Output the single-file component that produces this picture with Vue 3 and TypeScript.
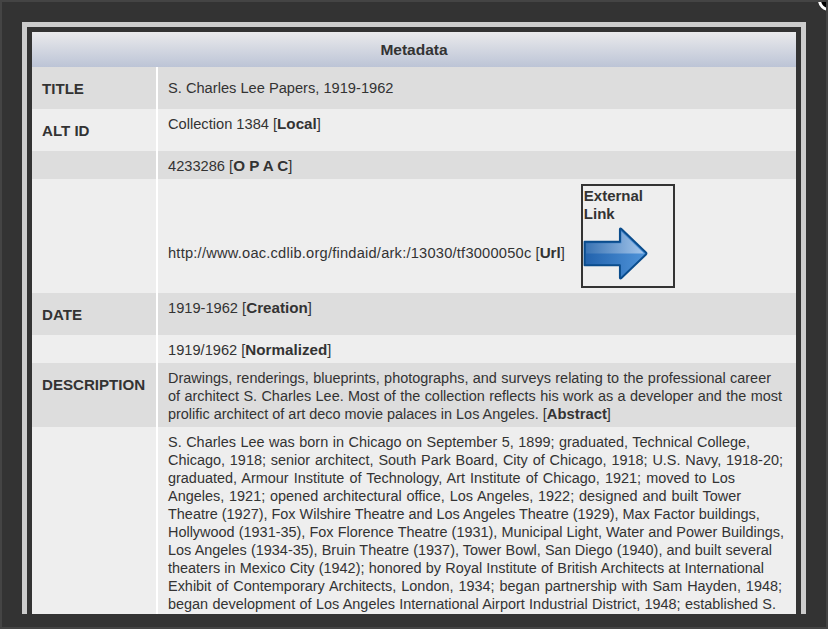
<script setup lang="ts">
interface Line {
  t: string
  w: number
}
interface Row {
  label?: string
  text?: string
  tag?: string
  tall?: boolean
  mid?: boolean
  lines?: Line[]
}
const rows: Row[] = [
  { label: 'TITLE', text: 'S. Charles Lee Papers, 1919-1962', tall: true, mid: true },
  { label: 'ALT ID', text: 'Collection 1384 ', tag: 'Local', tall: true },
  { text: '4233286 ', tag: 'O P A C' },
]
const rowsAfter: Row[] = [
  { label: 'DATE', text: '1919-1962 ', tag: 'Creation', tall: true },
  { text: '1919/1962 ', tag: 'Normalized' },
  {
    label: 'DESCRIPTION',
    lines: [
      { t: 'Drawings, renderings, blueprints, photographs, and surveys relating to the professional career', w: 603 },
      { t: 'of architect S. Charles Lee. Most of the collection reflects his work as a developer and the most', w: 614 },
    ],
    text: 'prolific architect of art deco movie palaces in Los Angeles. ',
    tag: 'Abstract',
  },
  {
    lines: [
      { t: 'S. Charles Lee was born in Chicago on September 5, 1899; graduated, Technical College,', w: 582 },
      { t: 'Chicago, 1918; senior architect, South Park Board, City of Chicago, 1918; U.S. Navy, 1918-20;', w: 615 },
      { t: 'graduated, Armour Institute of Technology, Art Institute of Chicago, 1921; moved to Los', w: 567 },
      { t: 'Angeles, 1921; opened architectural office, Los Angeles, 1922; designed and built Tower', w: 573 },
      { t: 'Theatre (1927), Fox Wilshire Theatre and Los Angeles Theatre (1929), Max Factor buildings,', w: 589 },
      { t: 'Hollywood (1931-35), Fox Florence Theatre (1931), Municipal Light, Water and Power Buildings,', w: 616 },
      { t: 'Los Angeles (1934-35), Bruin Theatre (1937), Tower Bowl, San Diego (1940), and built several', w: 604 },
      { t: 'theaters in Mexico City (1942); honored by Royal Institute of British Architects at International', w: 596 },
      { t: 'Exhibit of Contemporary Architects, London, 1934; began partnership with Sam Hayden, 1948;', w: 614 },
      { t: 'began development of Los Angeles International Airport Industrial District, 1948; established S.', w: 608 },
    ],
  },
]
</script>

<template>
  <div class="page">
    <div class="viewport">
      <div class="panel">
        <div class="inner">
          <h1 class="head">Metadata</h1>
          <div v-for="(r, i) in rows" :key="i" class="row" :class="{ alt: i % 2 === 0, tall: r.tall, mid: r.mid }">
            <div class="label">{{ r.label }}</div>
            <div class="value">{{ r.text }}<template v-if="r.tag">[<b>{{ r.tag }}</b>]</template></div>
          </div>
          <div class="row link-row">
            <div class="label"></div>
            <div class="value link-value">
              <span class="url"><span class="addr">http://www.oac.cdlib.org/findaid/ark:/13030/tf3000050c</span> [<b>Url</b>]</span>
              <div class="ext">
                <b>External Link</b>
                <svg class="arrow" width="65" height="53" viewBox="0 0 66 54">
                  <defs>
                    <linearGradient id="af" x1="0" y1="0" x2="1" y2="0">
                      <stop offset="0" stop-color="#3a74b4" />
                      <stop offset="1" stop-color="#a4c6ec" />
                    </linearGradient>
                    <linearGradient id="ab" x1="0" y1="0" x2="1" y2="0">
                      <stop offset="0" stop-color="#2262ac" />
                      <stop offset="1" stop-color="#4f94da" />
                    </linearGradient>
                  </defs>
                  <path d="M1.5 15 H37.5 V2 Q38 1 39 2 L64 26 Q65 27 64 28 L39 52 Q38 53 37.5 52 V39 H1.5 Z" fill="url(#ab)" stroke="#0a4c8c" stroke-width="2" stroke-linejoin="round" />
                  <path d="M3 16.5 H39 V4.5 L62 27 H3 Z" fill="url(#af)" />
                </svg>
              </div>
            </div>
          </div>
          <div v-for="(r, i) in rowsAfter" :key="'a' + i" class="row" :class="{ alt: i % 2 === 0, tall: r.tall }">
            <div class="label">{{ r.label }}</div>
            <div class="value">
              <span v-for="l in r.lines" :key="l.t" class="line" :style="{ width: l.w + 'px' }">{{ l.t }}</span>
              <span v-if="r.text" class="last" :class="{ small: r.lines }">{{ r.text }}<template v-if="r.tag">[<b>{{ r.tag }}</b>]</template></span>
            </div>
          </div>
        </div>
      </div>
    </div>
    <button class="close" aria-label="Close"></button>
  </div>
</template>

<style scoped>
.page {
  position: relative;
  box-sizing: border-box;
  width: 828px;
  height: 629px;
  background: #333;
  border: 2px solid #444;
  overflow: hidden;
  padding: 20px 20px 0;
  font-family: "Liberation Sans", Arial, sans-serif;
  font-size: 14.65px;
  line-height: 18px;
  color: #333;
}
.viewport {
  width: 784px;
  height: 592px;
  overflow: hidden;
}
.panel {
  border: 5px solid #ccc;
  background: #333;
}
.inner {
  border: 5px solid #333;
}
.head {
  margin: 0;
  height: 35px;
  box-sizing: border-box;
  padding-top: 1px;
  line-height: 34px;
  text-align: center;
  font-size: 15.5px;
  font-weight: bold;
  color: #333;
  background: linear-gradient(#eaeaec, #bcc4d6);
}
.row {
  display: grid;
  grid-template-columns: 124px 1fr;
  background: #eee;
}
.row.alt {
  background: #ddd;
}
.row.tall {
  min-height: 42px;
}
.label {
  padding: 13px 0 0 10px;
  font-weight: bold;
  font-size: 15.1px;
}
.value {
  border-left: 2px solid #fff;
  padding: 6px 8px 4px 10px;
}
.row.mid .value {
  display: flex;
  align-items: center;
  padding-top: 0;
  padding-bottom: 0;
}
.value b {
  font-size: 15.2px;
}
.line {
  display: block;
  font-size: 14.45px;
  white-space: nowrap;
  text-align: justify;
  text-align-last: justify;
}
.last.small {
  font-size: 14.45px;
}
.last.small b {
  font-size: 14.8px;
}
.link-value {
  display: flex;
  align-items: center;
  gap: 16px;
  height: 114px;
  box-sizing: border-box;
  padding: 5px 10px;
}
.url {
  margin-top: 34px;
}
.addr {
  letter-spacing: 0.22px;
}
.ext {
  box-sizing: border-box;
  width: 94px;
  height: 104px;
  padding-top: 1px;
  border: 2px solid #333;
  display: flex;
  flex-direction: column;
  align-items: flex-start;
}
.ext b {
  width: 70px;
  margin-left: 1px;
  font-size: 15px;
}
.arrow {
  display: block;
  margin-top: 4px;
}
.close {
  position: absolute;
  right: -14px;
  top: -13px;
  width: 22px;
  height: 22px;
  padding: 0;
  box-sizing: border-box;
  border: 3px solid #fff;
  border-radius: 50%;
  background: #000;
}
</style>
